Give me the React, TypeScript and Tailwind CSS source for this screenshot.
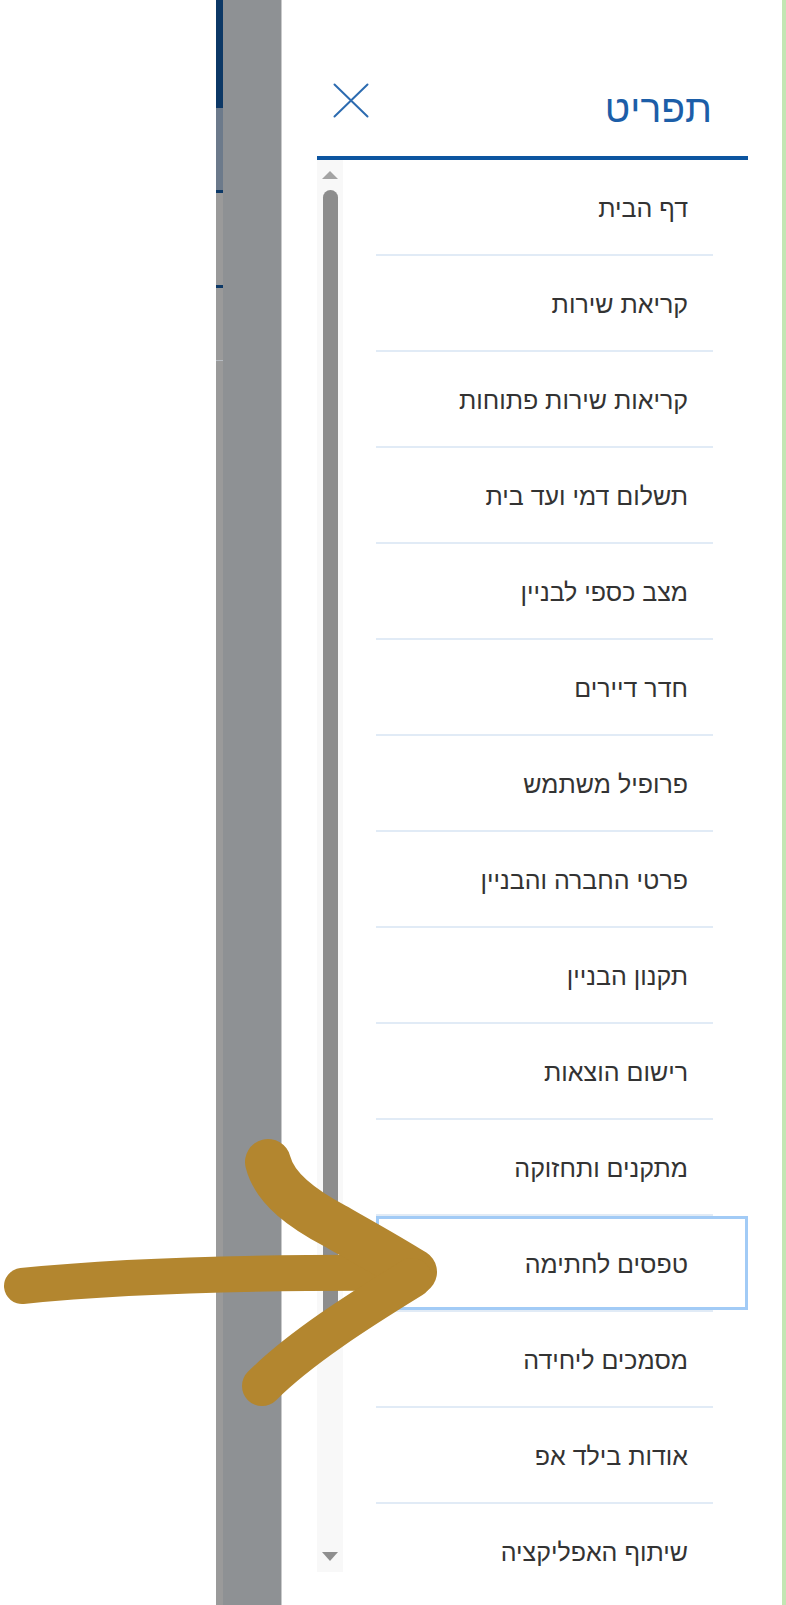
const items = [
  "דף הבית",
  "קריאת שירות",
  "קריאות שירות פתוחות",
  "תשלום דמי ועד בית",
  "מצב כספי לבניין",
  "חדר דיירים",
  "פרופיל משתמש",
  "פרטי החברה והבניין",
  "תקנון הבניין",
  "רישום הוצאות",
  "מתקנים ותחזוקה",
  "טפסים לחתימה",
  "מסמכים ליחידה",
  "אודות בילד אפ",
  "שיתוף האפליקציה",
];

const focusedIndex = 11;

const CloseIcon = () => (
  <svg width="36" height="35" viewBox="0 0 36 35" fill="none">
    <path
      d="M1.5 1.5 L34.5 33.5 M34.5 1.5 L1.5 33.5"
      stroke="#2c6bb0"
      strokeWidth="2"
      strokeLinecap="round"
    />
  </svg>
);

const App = () => {
  return (
    <div
      className="relative flex w-[786px] h-[1605px] overflow-hidden bg-white"
      style={{ fontFamily: '"Liberation Sans", Arial, sans-serif' }}
    >
      {/* page behind the drawer */}
      <div className="w-[216px] shrink-0 bg-white" />
      <div className="w-[7px] shrink-0 flex flex-col bg-[#9a9a9a]">
        <div className="h-[108px] bg-[#0c3866]" />
        <div className="h-[82px] bg-[#6c7a8b]" />
        <div className="h-[3px] bg-[#0c3866]" />
        <div className="h-[92px]" />
        <div className="h-[3px] bg-[#0c3866]" />
        <div className="h-[72px]" />
        <div className="h-px bg-[#b7bcc2]" />
      </div>
      <div className="w-[59px] shrink-0 bg-[#8e9194] border-r border-[#c9cacb]" />

      {/* drawer */}
      <div className="flex-1 flex flex-col pl-[35px] pr-[34px] bg-white" dir="ltr">
        {/* header */}
        <div className="h-[156px] flex items-start justify-between pt-[83px]">
          <button className="ml-[16px]">
            <CloseIcon />
          </button>
          <h2
            dir="rtl"
            className="mr-[36px] mt-[6px] text-[39px] leading-none text-[#1c5ea8] font-normal"
          >
            תפריט
          </h2>
        </div>
        <div className="h-[4px] bg-[#0d55a0]" />

        {/* list with scrollbar */}
        <div className="flex gap-[33px]">
          <div className="w-[26px] h-[1412px] shrink-0 flex flex-col items-center bg-[#f8f8f8]">
            <div className="mt-[11px] w-0 h-0 border-x-[8px] border-x-transparent border-b-[8px] border-b-[#a3a3a3]" />
            <div className="mt-[11px] w-[15px] h-[1140px] rounded-full bg-[#8d8d8d]" />
            <div className="mt-auto mb-[11px] w-0 h-0 border-x-[8px] border-x-transparent border-t-[9px] border-t-[#8f8f8f]" />
          </div>

          <ul className="flex-1 flex flex-col">
            {items.map((label, i) => (
              <li key={label} className="flex flex-col">
                <div
                  dir="rtl"
                  className={`h-[94px] flex items-center pt-[4px] pr-[60px] text-[25px] text-[#333333] ${
                    i === focusedIndex
                      ? "shadow-[inset_0_0_0_3px_#a2cbf6]"
                      : ""
                  }`}
                >
                  {label}
                </div>
                {i < items.length - 1 && (
                  <div className="h-[2px] mr-[35px] bg-[#e1ebf6]" />
                )}
              </li>
            ))}
          </ul>
        </div>
      </div>
      <div className="w-[4px] shrink-0 bg-[#c3e6b3]" />

      {/* hand-drawn annotation arrow */}
      <svg
        className="absolute inset-0 pointer-events-none"
        width="786"
        height="1605"
        viewBox="0 0 786 1605"
      >
        <g
          fill="none"
          stroke="#b3862f"
          strokeLinecap="round"
          strokeLinejoin="round"
        >
          <path d="M22 1286 C 120 1276, 260 1272, 412 1273" strokeWidth="36" />
          <path
            d="M268 1162 C 275 1190, 305 1210, 335 1226 C 365 1243, 392 1258, 414 1272"
            strokeWidth="46"
          />
          <path d="M412 1278 C 360 1310, 300 1348, 262 1386" strokeWidth="40" />
        </g>
      </svg>
    </div>
  );
};

export default App;
